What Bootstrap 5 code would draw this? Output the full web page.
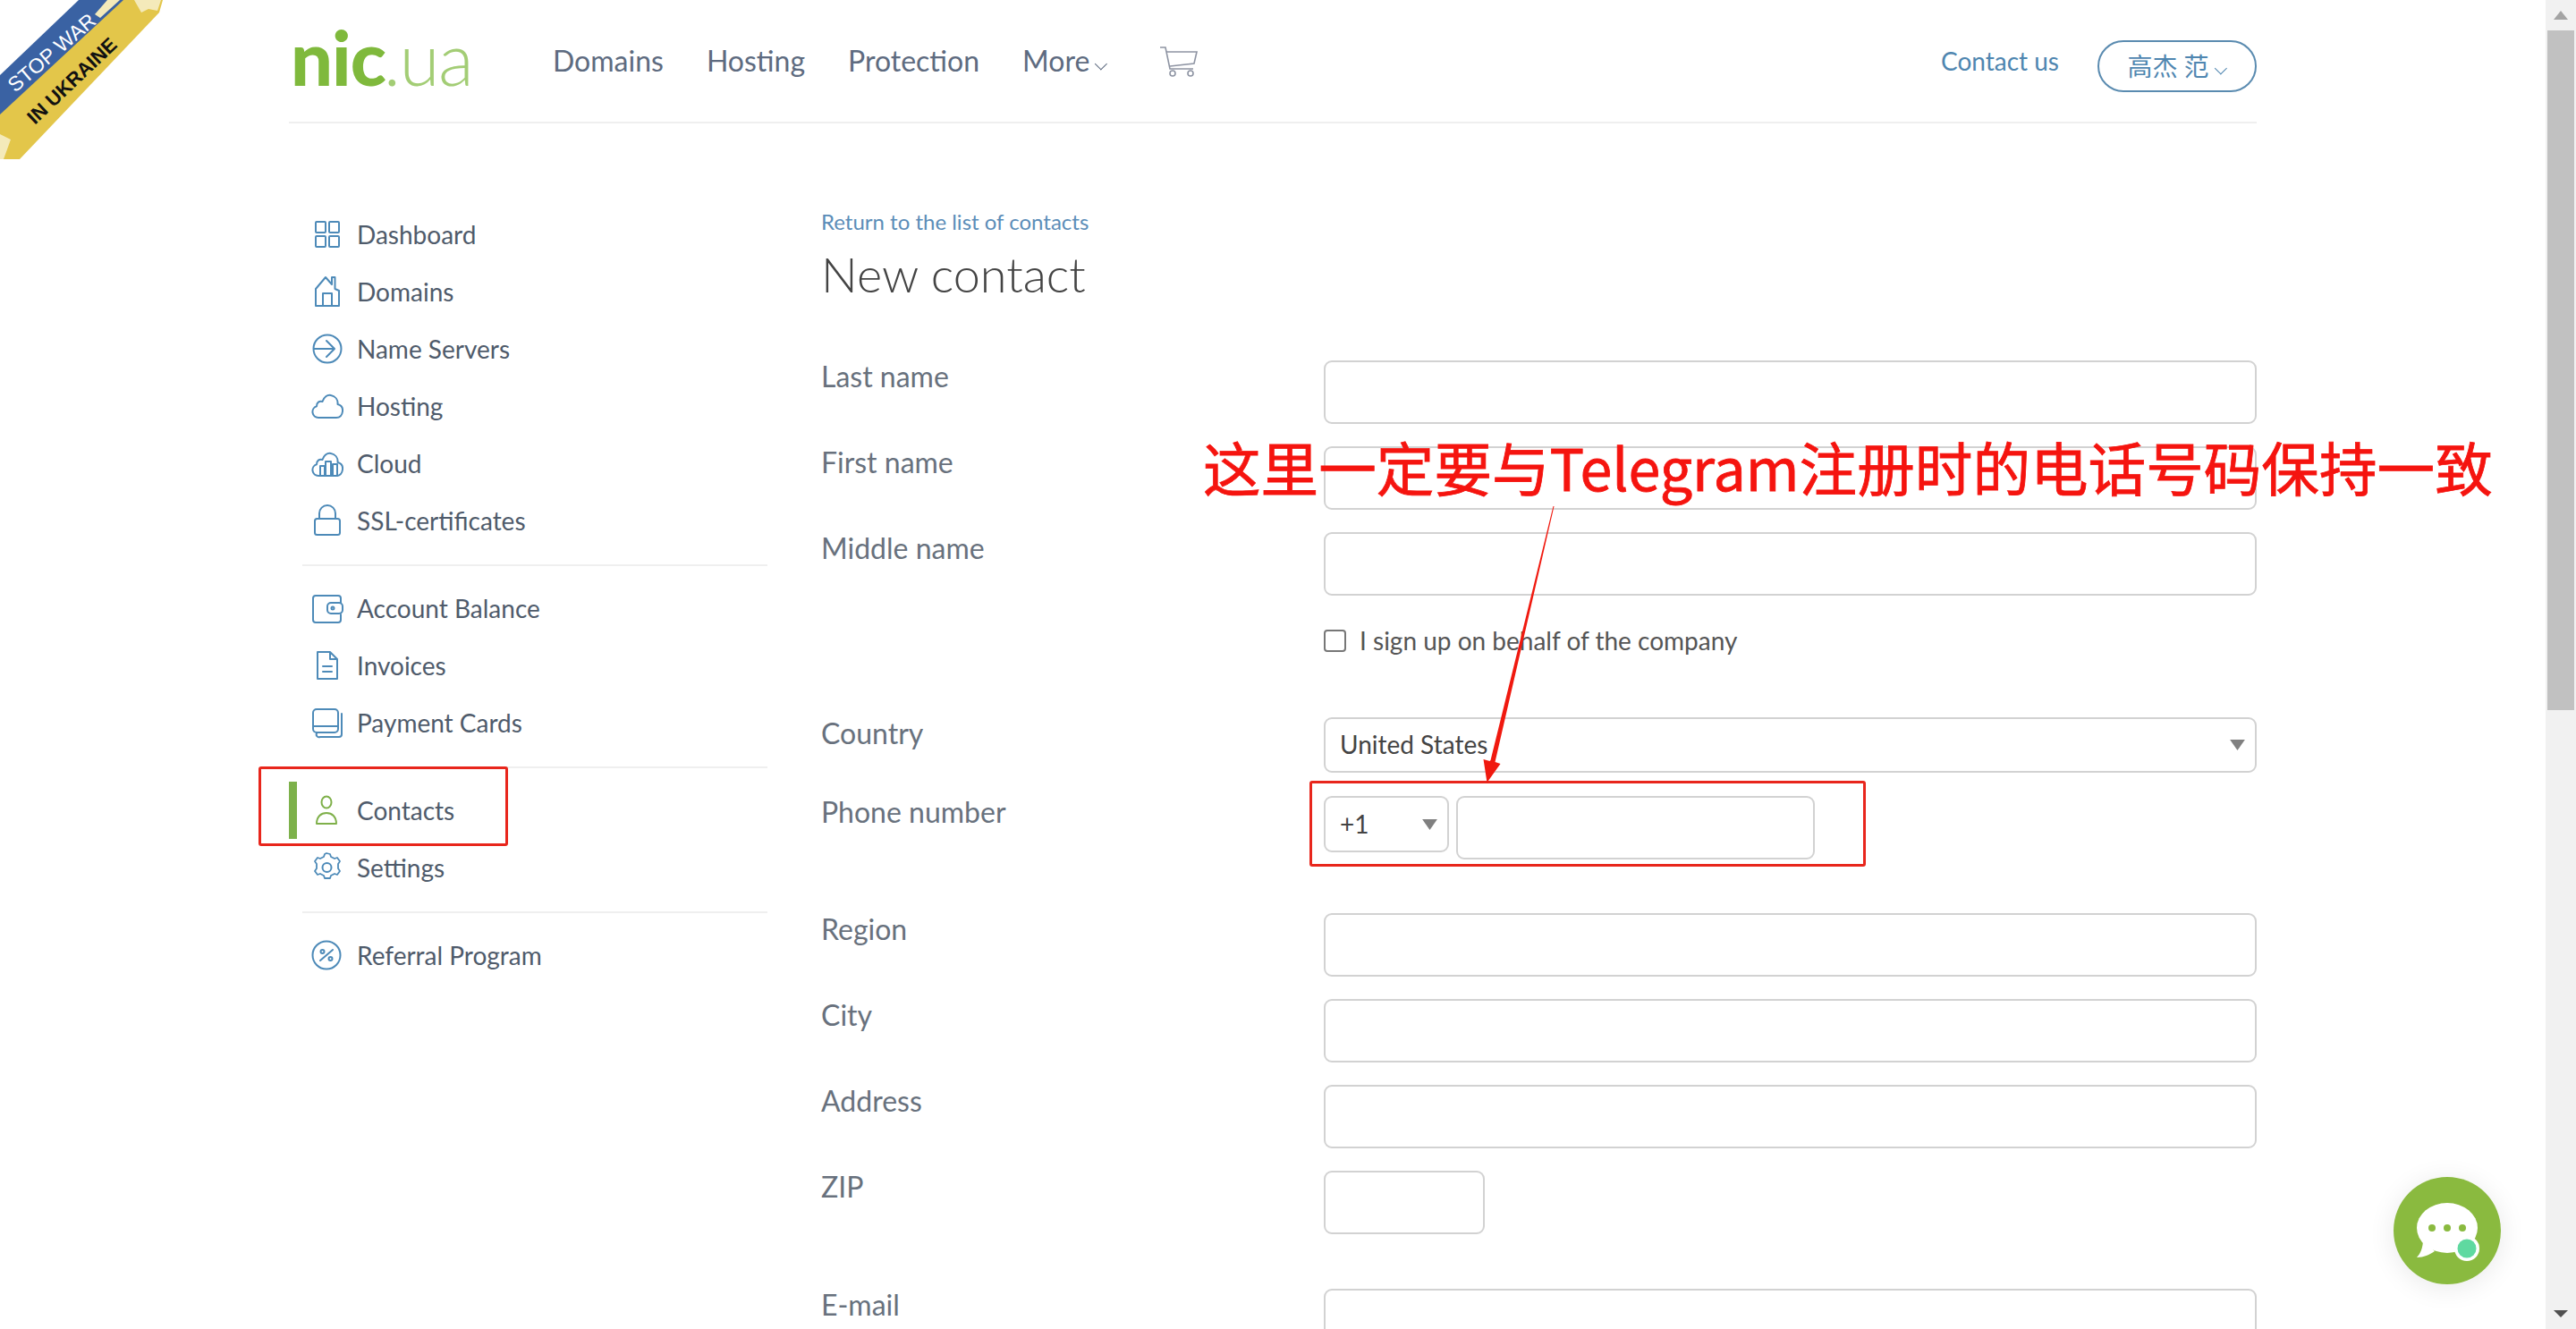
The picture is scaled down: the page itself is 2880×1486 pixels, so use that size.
<!DOCTYPE html>
<html lang="en">
<head>
<meta charset="utf-8">
<title>nic.ua - New contact</title>
<link href="https://cdn.jsdelivr.net/npm/bootstrap@5.3.0/dist/css/bootstrap.min.css" rel="stylesheet">
<style>
html,body{height:100%;overflow:hidden;background:#fff}
body{font-family:Lato,"Noto Sans CJK SC",sans-serif;color:#4f5b6b}
.shell{height:1486px;position:relative}
.viewport{flex:1 1 auto;min-width:0;overflow:hidden;height:1486px}
.wrap-page{width:2200px;margin-left:323px}
.sb-track{width:34px;flex:0 0 34px;background:#f1f1f1;padding:0 2px}
.sb-up{height:34px;font-size:0}
.sb-thumb{height:760px;background:#c1c1c1}
.sb-gap{height:658px}
.sb-down{height:34px}
.top-bar{height:138px;border-bottom:2px solid #efefef}
.brand-logo{font-size:80px;line-height:1;color:#7fb93c;width:295px;letter-spacing:-1px;padding-left:2px;text-decoration:none;margin-top:-8px;white-space:nowrap}
.brand-logo b{font-weight:900;font-family:Lato,sans-serif;font-size:83px}
.brand-logo i{font-style:normal;font-weight:300;color:#a3cd75;margin-left:-2px;font-size:82px;letter-spacing:-1.500px}
.top-nav{gap:48px;font-size:32px;margin-top:-1px}
.top-nav a{color:#5e6b80;text-decoration:none}
.caret-v{display:inline-block;width:10px;height:10px;border-right:1.5px solid currentColor;border-bottom:1.5px solid currentColor;transform:rotate(45deg) translate(-4px,-1px);margin-left:10px}
.cart-ico{margin-left:58px;margin-top:2px}
.contact-link{font-size:28px;color:#4f86b0;text-decoration:none;margin-right:43px}
.user-pill{width:178px;height:58px;border:2px solid #5a8bb0;border-radius:29px;color:#4f86b0;font-size:28px;background:#fff;padding:0;margin-top:12px}
.side-col{width:595px;flex:0 0 595px;padding-top:92px}
.side-item{height:64px;padding-left:25px;gap:15px;color:#4f5b6b;font-size:28px;text-decoration:none;position:relative}
.side-item svg{width:36px;height:36px;flex:0 0 36px;fill:none;stroke:#4d8ab8;stroke-width:2;stroke-linejoin:round;stroke-linecap:round}
.side-item.on svg{stroke:#7fb04a}
.side-item.on{border-left:9px solid #7db14b;padding-left:16px}
.side-sep{margin:17px 0 15px 15px;width:520px;border-top:2px solid #efefef;height:0}
.main-col{flex:1 1 auto;padding-top:92px}
.back-link{font-size:24px;line-height:36px;color:#5b8db8;text-decoration:none;display:block}
.page-title{font-size:54px;font-weight:300;color:#444;line-height:68px;margin:7px 0 62px}
.f-row{display:flex;margin-bottom:25px}
.f-label{width:562px;flex:0 0 562px;font-size:32px;line-height:36px;color:#68717d}
.f-box{flex:1 1 auto;min-width:0}
.form-control.fld,.form-select.fld{height:71px;border:2px solid #d2d2d2;border-radius:9px;box-shadow:none;font-size:28px;color:#444;background-color:#fff}
.form-select.fld{height:62px;padding:0 40px 2px 16px;background-image:url("data:image/svg+xml,%3Csvg xmlns='http://www.w3.org/2000/svg' viewBox='0 0 14 10'%3E%3Cpath d='M0 0h14L7 10z' fill='%23808080'/%3E%3C/svg%3E");background-size:17px 12px;background-position:right 11px center}
.sel-code{width:140px;flex:0 0 140px;height:63px!important}
.tel-fld{width:401px;flex:0 0 401px}
.zip-fld{width:180px}
.chk-row{height:50px;margin-bottom:61px;padding-left:562px;gap:15px;font-size:28px;color:#555}
.chk-row .form-check-input{width:25px;height:25px;margin:0;border:2px solid #777;border-radius:4px;flex:0 0 25px}
.gap-country{margin-bottom:26px}
.gap-phone{margin-bottom:60px}
.gap-zip{margin-bottom:61px}
.ribbon{position:absolute;left:0;top:0;width:190px;height:180px}
.mark-text{position:absolute;left:1345px;top:479px;font-family:"Noto Sans CJK SC",sans-serif;font-size:64.600px;font-weight:400;-webkit-text-stroke:.8px #f5140f;line-height:84px;color:#f5140f;white-space:nowrap}
.mark-box{position:absolute;border:3px solid #e8261c;border-radius:3px}
.mark-contacts{left:289px;top:857px;width:279px;height:89px}
.mark-phone{left:1464px;top:873px;width:622px;height:96px}
.mark-arrow{position:absolute;left:0;top:0;pointer-events:none}
.chat-fab{position:absolute;left:2676px;top:1316px;width:120px;height:120px;border-radius:50%;box-shadow:0 4px 30px rgba(0,0,0,.09)}
</style>
</head>
<body>
<div class="shell d-flex">
  <div class="viewport">
    <div class="wrap-page">
      <header class="top-bar d-flex align-items-center">
        <a class="brand-logo" href="#"><b>nic</b><i>.ua</i></a>
        <nav class="top-nav d-flex align-items-center">
          <a href="#">Domains</a><a href="#">Hosting</a><a href="#">Protection</a><a href="#">More<span class="caret-v"></span></a>
        </nav>
        <svg class="cart-ico" width="44" height="36" viewBox="0 0 44 36" fill="none" stroke="#8e94a3" stroke-width="1.6"><path d="M1 2h6l5 24h26"/><path d="M8 7h34l-3 13-27 3"/><circle cx="15" cy="31" r="3"/><circle cx="35" cy="31" r="3"/></svg>
        <div class="ms-auto d-flex align-items-center">
          <a class="contact-link" href="#">Contact us</a>
          <button class="user-pill" type="button">高杰 范<span class="caret-v"></span></button>
        </div>
      </header>
      <div class="d-flex">
        <aside class="side-col">
          <a class="side-item d-flex align-items-center" href="#"><svg viewBox="0 0 36 36"><rect x="5" y="4" width="11" height="12" rx="1"/><rect x="20" y="4" width="11" height="12" rx="1"/><rect x="5" y="20" width="11" height="12" rx="1"/><rect x="20" y="20" width="11" height="12" rx="1"/></svg>Dashboard</a>
          <a class="side-item d-flex align-items-center" href="#"><svg viewBox="0 0 36 36"><path d="M5 34V15L16 2l7 8V2h3.500v13L31 17v17zM13 34V20h10v14"/></svg>Domains</a>
          <a class="side-item d-flex align-items-center" href="#"><svg viewBox="0 0 36 36"><circle cx="18" cy="18" r="15.500"/><path d="M3 18h22M17 9l9 9-9 9"/></svg>Name Servers</a>
          <a class="side-item d-flex align-items-center" href="#"><svg viewBox="0 0 36 36"><path d="M8 31a6.500 6.500 0 0 1-2-12.700C6 14 9 12 12.500 13 14 8 18 5 22 6c5 1 8 5 7.500 10 4 1 6 4 5.500 8-.5 4-3 7-7 7z"/></svg>Hosting</a>
          <a class="side-item d-flex align-items-center" href="#"><svg viewBox="0 0 36 36"><path d="M8 32a6.500 6.500 0 0 1-2-12.700C6 15 9 13 12.500 14 14 9 18 6 22 7c5 1 8 5 7.500 10 4 1 6 4 5.500 8-.5 4-3 7-7 7z"/><path d="M10 32V21h5v11M16 32V16h6v16M24 32V19h5v13"/></svg>Cloud</a>
          <a class="side-item d-flex align-items-center" href="#"><svg viewBox="0 0 36 36"><rect x="4" y="16" width="28" height="18" rx="2.500"/><path d="M9 16V10a9 9 0 0 1 18 0v6"/></svg>SSL-certificates</a>
          <div class="side-sep"></div>
          <a class="side-item d-flex align-items-center" href="#"><svg viewBox="0 0 36 36"><path d="M33 12V7a3 3 0 0 0-3-3H5a3 3 0 0 0-3 3v24a3 3 0 0 0 3 3h25a3 3 0 0 0 3-3v-6"/><rect x="18" y="12" width="17" height="12" rx="4"/><circle cx="24" cy="18" r="1.500"/></svg>Account Balance</a>
          <a class="side-item d-flex align-items-center" href="#"><svg viewBox="0 0 36 36"><path d="M7 33V3h14l8 8v22zM21 3v8h8M13 19h10M13 25h10"/></svg>Invoices</a>
          <a class="side-item d-flex align-items-center" href="#"><svg viewBox="0 0 36 36"><rect x="2" y="3" width="28" height="26" rx="4"/><path d="M2 22h28M34 8v23a3 3 0 0 1-3 3H10a3 3 0 0 1-4-4"/></svg>Payment Cards</a>
          <div class="side-sep"></div>
          <a class="side-item on d-flex align-items-center" href="#"><svg viewBox="0 0 36 36"><ellipse cx="17" cy="9" rx="5.500" ry="6.500"/><path d="M6 33c0-8 5-12 11-12s11 4 11 12z"/></svg>Contacts</a>
          <a class="side-item d-flex align-items-center" href="#"><svg viewBox="0 0 36 36"><path d="M17 2l4 1 1 3 4 2 3-1 3 4-2 3v5l2 3-3 4-3-1-4 2-1 3h-6l-1-3-4-2-3 1-3-4 2-3v-5l-2-3 3-4 3 1 4-2 1-3z" stroke-width="1.800"/><circle cx="17.500" cy="18" r="5"/></svg>Settings</a>
          <div class="side-sep"></div>
          <a class="side-item d-flex align-items-center" href="#"><svg viewBox="0 0 36 36"><circle cx="17" cy="18" r="15.500"/><circle cx="12.500" cy="14" r="2"/><circle cx="21.500" cy="22" r="2"/><path d="M10 24l14-12"/></svg>Referral Program</a>
        </aside>
        <main class="main-col">
          <a class="back-link" href="#">Return to the list of contacts</a>
          <h1 class="page-title">New contact</h1>
          <form>
            <div class="f-row"><label class="f-label">Last name</label><div class="f-box"><input class="form-control fld" type="text"></div></div>
            <div class="f-row"><label class="f-label">First name</label><div class="f-box"><input class="form-control fld" type="text"></div></div>
            <div class="f-row"><label class="f-label">Middle name</label><div class="f-box"><input class="form-control fld" type="text"></div></div>
            <div class="chk-row d-flex align-items-center"><input class="form-check-input" type="checkbox" id="cmp"><label for="cmp">I sign up on behalf of the company</label></div>
            <div class="f-row gap-country"><label class="f-label">Country</label><div class="f-box"><select class="form-select fld"><option>United States</option></select></div></div>
            <div class="f-row gap-phone"><label class="f-label">Phone number</label><div class="f-box d-flex gap-2 align-items-start"><select class="form-select fld sel-code"><option>+1</option></select><input class="form-control fld tel-fld" type="tel"></div></div>
            <div class="f-row"><label class="f-label">Region</label><div class="f-box"><input class="form-control fld" type="text"></div></div>
            <div class="f-row"><label class="f-label">City</label><div class="f-box"><input class="form-control fld" type="text"></div></div>
            <div class="f-row"><label class="f-label">Address</label><div class="f-box"><input class="form-control fld" type="text"></div></div>
            <div class="f-row gap-zip"><label class="f-label">ZIP</label><div class="f-box"><input class="form-control fld zip-fld" type="text"></div></div>
            <div class="f-row"><label class="f-label">E-mail</label><div class="f-box"><input class="form-control fld" type="email"></div></div>
          </form>
        </main>
      </div>
    </div>
  </div>
  <div class="sb-track">
    <div class="sb-up d-flex align-items-center justify-content-center"><svg width="16" height="10" viewBox="0 0 16 10"><path d="M8 0l8 10H0z" fill="#a3a3a3"/></svg></div>
    <div class="sb-thumb"></div>
    <div class="sb-gap"></div>
    <div class="sb-down d-flex align-items-center justify-content-center"><svg width="16" height="8" viewBox="0 0 16 8"><path d="M0 0h16L8 8z" fill="#505050"/></svg></div>
  </div>

  <svg class="ribbon" viewBox="0 0 190 180">
    <path d="M0 84L88 0h52L0 130z" fill="#3a62a3"/>
    <path d="M0 128L138 0h44l-4 14L22 178H0z" fill="#e3c64a"/>
    <path d="M120 0l14 0-22 20-6-4zM0 150l12 6-8 22H0zM150 0h30l-4 12-10-2-8 4z" fill="#f4eaba"/>
    <text x="17" y="104" transform="rotate(-40.500 17 104)" font-family="Liberation Sans,sans-serif" font-size="23" fill="#fff">STOP WAR</text>
    <text x="39" y="140" transform="rotate(-43.500 39 140)" font-family="Liberation Sans,sans-serif" font-weight="700" font-size="22" fill="#111">IN UKRAINE</text>
  </svg>

  <div class="mark-box mark-contacts"></div>
  <div class="mark-box mark-phone"></div>
  <svg class="mark-arrow" width="2880" height="1486" viewBox="0 0 2880 1486"><path d="M1736.500 566l1 0-66 286 6 2-15 21-4-26 7 2 1-1z" fill="#f0190f"/></svg>
  <div class="mark-text">这里一定要与Telegram注册时的电话号码保持一致</div>

  <div class="chat-fab">
    <svg width="120" height="120" viewBox="0 0 120 120"><circle cx="60" cy="60" r="60" fill="#8aba3f"/><ellipse cx="60" cy="57" rx="34" ry="28" fill="#fff"/><path d="M33 70c0 9-3 16-7 20 8 0 14-3 20-7z" fill="#fff"/><circle cx="43" cy="57" r="4" fill="#8aba3f"/><circle cx="60" cy="57" r="4" fill="#8aba3f"/><circle cx="77" cy="57" r="4" fill="#8aba3f"/><circle cx="82" cy="80" r="14" fill="#fff"/><circle cx="82" cy="80" r="10.500" fill="#5fd9a0"/></svg>
  </div>
</div>
<script src="https://cdn.jsdelivr.net/npm/bootstrap@5.3.0/dist/js/bootstrap.bundle.min.js"></script>
</body>
</html>
